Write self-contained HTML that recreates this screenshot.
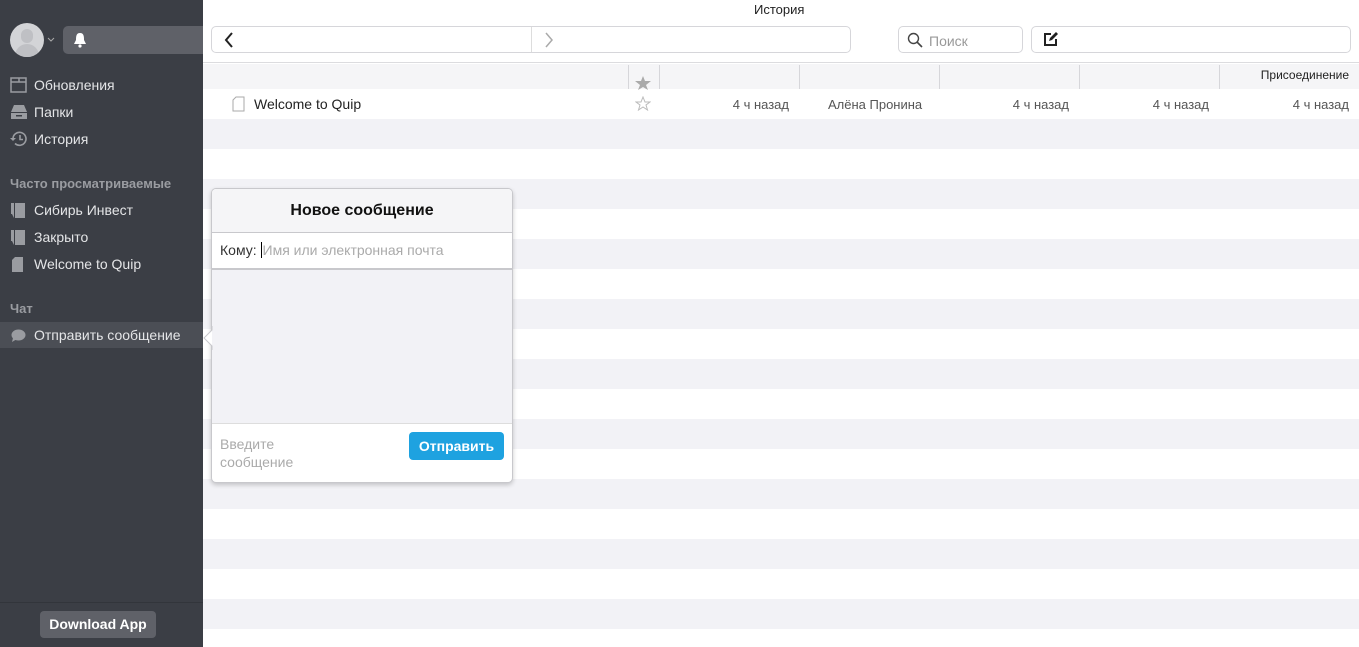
<!DOCTYPE html>
<html><head><meta charset="utf-8"><style>
*{box-sizing:border-box;margin:0;padding:0}
body{width:1359px;height:647px;overflow:hidden;font-family:"Liberation Sans",sans-serif;background:#fff;position:relative}
.sb{position:absolute;left:0;top:0;width:203px;height:647px;background:#3b3e45;color:#e4e5e7;overflow:hidden}
.it{position:absolute;left:0;width:203px;height:26px;font-size:14px;line-height:26px;padding-left:34px}
.ic{position:absolute;left:10px;top:5px}
.hd{position:absolute;left:10px;font-size:13px;font-weight:bold;color:#9a9ca1}
.main{position:absolute;left:203px;top:0;right:0;bottom:0}
.stripe{position:absolute;left:0;right:0;height:30px;background:#f2f2f6}
.t{position:absolute;font-size:13px;color:#555}
.col{position:absolute;top:65px;width:1px;height:24px;background:#d6d6da}
</style></head><body>
<div class="main">
  <div style="position:absolute;left:0;top:0;right:0;height:63px;background:#fff;border-bottom:1px solid #dcdcdf"></div>
  <div style="position:absolute;left:551px;top:2px;font-size:13px;color:#222">История</div>
  <div style="position:absolute;left:8px;top:26px;width:640px;height:27px;border:1px solid #d6d6da;border-radius:5px"></div>
  <div style="position:absolute;left:328px;top:27px;width:1px;height:25px;background:#ddd"></div>
  <svg style="position:absolute;left:20px;top:32px" width="12" height="16"><path d="M9 1 L3 8 L9 15" stroke="#222" stroke-width="2" fill="none"/></svg>
  <svg style="position:absolute;left:340px;top:32px" width="12" height="16"><path d="M3 1 L9 8 L3 15" stroke="#aaa" stroke-width="1.5" fill="none"/></svg>
  <div style="position:absolute;left:695px;top:26px;width:125px;height:27px;border:1px solid #d6d6da;border-radius:5px"></div>
  <svg style="position:absolute;left:704px;top:32px" width="16" height="16"><circle cx="6.5" cy="6.5" r="5" stroke="#444" stroke-width="1.4" fill="none"/><path d="M10 10 L15 15" stroke="#444" stroke-width="1.6"/></svg>
  <div class="t" style="left:726px;top:33px;color:#999;font-size:14px">Поиск</div>
  <div style="position:absolute;left:828px;top:26px;width:320px;height:27px;border:1px solid #d6d6da;border-radius:5px"></div>
  <svg style="position:absolute;left:840px;top:31px" width="16" height="16"><path d="M8 3 H2 V14 H13 V8" stroke="#222" stroke-width="2" fill="none"/><path d="M6 10 L7 7 L13 1 L15 3 L9 9 Z" fill="#222"/></svg>
  <div style="position:absolute;left:0;right:0;top:64px;height:25px;background:#f5f5f7"></div>
  <div class="col" style="left:425px"></div><div class="col" style="left:456px"></div><div class="col" style="left:596px"></div><div class="col" style="left:736px"></div><div class="col" style="left:876px"></div><div class="col" style="left:1016px"></div>
  <svg style="position:absolute;left:432px;top:76px" width="16" height="14"><path d="M8 0 L10 5 L16 5 L11 9 L13 14 L8 11 L3 14 L5 9 L0 5 L6 5 Z" fill="#aaa"/></svg>
  <div class="t" style="right:10px;top:68px;color:#222;font-size:12px">Присоединение</div>
  <svg style="position:absolute;left:29px;top:96px" width="13" height="16"><path d="M4 1 H12 V15 H1 V4 Z" stroke="#aaa" fill="none"/></svg>
  <div class="t" style="left:51px;top:96px;font-size:14px;color:#222">Welcome to Quip</div>
  <svg style="position:absolute;left:432px;top:96px" width="16" height="15"><path d="M8 1 L10 6 L15 6 L11 9 L12.5 14 L8 11 L3.5 14 L5 9 L1 6 L6 6 Z" stroke="#bbb" fill="none"/></svg>
  <div class="t" style="right:570px;top:97px">4 ч назад</div>
  <div class="t" style="left:625px;top:97px">Алёна Пронина</div>
  <div class="t" style="right:290px;top:97px">4 ч назад</div>
  <div class="t" style="right:150px;top:97px">4 ч назад</div>
  <div class="t" style="right:10px;top:97px">4 ч назад</div>
  <div class="stripe" style="top:119px"></div><div class="stripe" style="top:179px"></div><div class="stripe" style="top:239px"></div><div class="stripe" style="top:299px"></div><div class="stripe" style="top:359px"></div><div class="stripe" style="top:419px"></div><div class="stripe" style="top:479px"></div><div class="stripe" style="top:539px"></div><div class="stripe" style="top:599px"></div>
</div>
<div class="sb">
  <div style="position:absolute;left:10px;top:23px;width:34px;height:34px;border-radius:50%;background:#d3d4d7;overflow:hidden"><div style="position:absolute;left:11px;top:6px;width:12px;height:14px;border-radius:6px;background:#bfc0c4"></div><div style="position:absolute;left:5px;top:21px;width:24px;height:16px;border-radius:12px 12px 0 0;background:#bfc0c4"></div></div>
  <svg style="position:absolute;left:47px;top:37px" width="8" height="6"><path d="M1 1 L4 4 L7 1" stroke="#aaa" fill="none"/></svg>
  <div style="position:absolute;left:63px;top:26px;width:150px;height:28px;border-radius:5px;background:#5f6168"></div>
  <svg style="position:absolute;left:73px;top:32px" width="14" height="16"><path d="M7 1 C3 1 3 5 3 8 L1 12 H13 L11 8 C11 5 11 1 7 1Z" fill="#fff"/><circle cx="7" cy="14" r="1.6" fill="#fff"/></svg>
  <div class="it" style="top:72px"><svg class="ic" width="17" height="16"><rect x="1" y="1" width="15" height="14" stroke="#9a9ca1" stroke-width="1.5" fill="none"/><path d="M1 5 H16 M9 1 V5" stroke="#9a9ca1" stroke-width="1.5"/></svg>Обновления</div>
  <div class="it" style="top:99px"><svg class="ic" width="18" height="16"><path d="M4 1 H14 L17 8 H1 Z" fill="#9a9ca1"/><rect x="1" y="9" width="16" height="6" fill="#9a9ca1"/><rect x="6" y="11" width="6" height="1.5" fill="#3b3e45"/></svg>Папки</div>
  <div class="it" style="top:126px"><svg class="ic" width="18" height="16"><path d="M3 8 A6.5 6.5 0 1 1 5 12.5" stroke="#9a9ca1" stroke-width="1.6" fill="none"/><path d="M0 7 L3 10 L6 7" fill="#9a9ca1"/><path d="M10 4 V8.5 H13" stroke="#9a9ca1" stroke-width="1.6" fill="none"/></svg>История</div>
  <div class="hd" style="top:176px">Часто просматриваемые</div>
  <div class="it" style="top:197px"><svg class="ic" width="16" height="16"><path d="M1 1 H4 V16 L2 12 H1Z M5 1 H15 V16 H5Z" fill="#9a9ca1"/></svg>Сибирь Инвест</div>
  <div class="it" style="top:224px"><svg class="ic" width="16" height="16"><path d="M1 1 H4 V16 L2 12 H1Z M5 1 H15 V16 H5Z" fill="#9a9ca1"/></svg>Закрыто</div>
  <div class="it" style="top:251px"><svg class="ic" width="16" height="16"><path d="M5 1 H13 V16 H2 V4Z" fill="#9a9ca1"/></svg>Welcome to Quip</div>
  <div class="hd" style="top:301px">Чат</div>
  <div class="it" style="top:322px;background:#4b4e55"><svg class="ic" style="left:11px;top:7px" width="16" height="14"><ellipse cx="7.5" cy="6" rx="7" ry="5.5" fill="#9a9ca1"/><path d="M2 9 L1 13 L6 10Z" fill="#9a9ca1"/></svg>Отправить сообщение</div>
  <div style="position:absolute;left:0;top:602px;width:203px;height:1px;background:#32353b"></div>
  <div style="position:absolute;left:40px;top:611px;width:116px;height:27px;border-radius:4px;background:#5f6168;color:#fff;font-weight:bold;font-size:14px;line-height:27px;text-align:center">Download App</div>
</div>
<div style="position:absolute;left:211px;top:188px;width:302px;height:295px;background:#fff;border:1px solid #c8c8cc;border-radius:5px;box-shadow:0 2px 5px rgba(0,0,0,.2);overflow:hidden">
  <div style="height:44px;background:#f5f5f7;border-bottom:1px solid #c8c8cc;text-align:center;font-weight:bold;font-size:16px;line-height:43px;color:#111">Новое сообщение</div>
  <div style="height:37px;border-bottom:2px solid #c8c8cc;font-size:14px;line-height:35px;padding-left:8px;color:#333">Кому: <span style="border-left:1px solid #000;color:#aaa;padding-left:1px;font-size:14px">Имя или электронная почта</span></div>
  <div style="height:154px;background:#f2f2f6;border-bottom:1px solid #ddd"></div>
  <div style="position:absolute;left:8px;top:246px;font-size:14px;line-height:18px;color:#aaa">Введите<br>сообщение</div>
  <div style="position:absolute;left:197px;top:243px;width:95px;height:28px;border-radius:4px;background:#1ea2e0;color:#fff;font-weight:bold;font-size:14px;line-height:28px;text-align:center">Отправить</div>
</div>
<svg style="position:absolute;left:201px;top:326px" width="12" height="24"><path d="M11 0 L11 4 L3 12 L11 20 L11 24" fill="#fff" stroke="#c8c8cc"/></svg>
</body></html>
